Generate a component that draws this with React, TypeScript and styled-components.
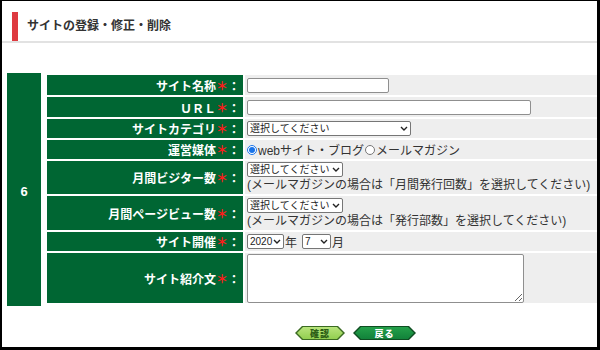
import React from "react";
import styled, { createGlobalStyle } from "styled-components";

const GlobalStyle = createGlobalStyle`
  html, body {
    margin: 0;
    padding: 0;
    background: #000;
  }
  body {
    font-family: "Liberation Sans", "Noto Sans CJK JP", sans-serif;
    font-size: 12px;
    color: #333;
  }
`;

const Chevron = () => (
  <ChevronIcon width="8" height="5" viewBox="0 0 8 5">
    <path d="M1 1 L4 4 L7 1" fill="none" stroke="#222" strokeWidth="1.4" />
  </ChevronIcon>
);

const SelectBox = ({ width, options }: { width: number; options: string[] }) => (
  <SelectWrap>
    <Select style={{ width }} defaultValue={options[0]}>
      {options.map((o) => (
        <option key={o}>{o}</option>
      ))}
    </Select>
    <Chevron />
  </SelectWrap>
);

const Label = ({ text }: { text: string }) => (
  <LabelCell>
    {text}
    <Req>＊</Req>：
  </LabelCell>
);

const App = () => {
  return (
    <>
      <GlobalStyle />
      <Page>
        <Header>
          <Title>サイトの登録・修正・削除</Title>
        </Header>

        <FormTable>
          <NumberCell>6</NumberCell>
          <Grid>
            <Label text="サイト名称" />
            <Field>
              <TextInput style={{ width: 142 }} />
            </Field>

            <Label text="ＵＲＬ" />
            <Field>
              <TextInput style={{ width: 284 }} />
            </Field>

            <Label text="サイトカテゴリ" />
            <Field>
              <SelectBox width={164} options={["選択してください"]} />
            </Field>

            <Label text="運営媒体" />
            <Field>
              <RadioLabel>
                <Radio type="radio" name="media" defaultChecked />
                webサイト・ブログ
              </RadioLabel>
              <RadioLabel>
                <Radio type="radio" name="media" />
                メールマガジン
              </RadioLabel>
            </Field>

            <Label text="月間ビジター数" />
            <StackField>
              <SelectBox width={96} options={["選択してください"]} />
              <Note>(メールマガジンの場合は「月間発行回数」を選択してください)</Note>
            </StackField>

            <Label text="月間ページビュー数" />
            <StackField>
              <SelectBox width={96} options={["選択してください"]} />
              <Note>(メールマガジンの場合は「発行部数」を選択してください)</Note>
            </StackField>

            <Label text="サイト開催" />
            <Field>
              <SelectBox width={37} options={["2020"]} />
              <Unit>年</Unit>
              <Spacer />
              <SelectBox width={29} options={["7"]} />
              <Unit>月</Unit>
            </Field>

            <Label text="サイト紹介文" />
            <TopField>
              <TextArea />
            </TopField>
          </Grid>
        </FormTable>

        <Buttons>
          <ButtonFrame $w={50} $border="#3b6b22">
            <ButtonFace $bg="linear-gradient(#b8e47c, #92cf50)" $color="#2d5f17">
              確認
            </ButtonFace>
          </ButtonFrame>
          <ButtonFrame $w={63} $border="#0f4d22">
            <ButtonFace $bg="linear-gradient(#24a04a, #12823a)" $color="#fff">
              戻る
            </ButtonFace>
          </ButtonFrame>
        </Buttons>
      </Page>
    </>
  );
};

export default App;

const Page = styled.div`
  background: #fff;
  margin: 1px 3px 0 2px;
  height: 346px;
  overflow: hidden;
`;

const Header = styled.div`
  margin-top: 11px;
  padding-left: 10px;
  border-bottom: 2px solid #e2e2e2;
`;

const Title = styled.h2`
  margin: 0;
  height: 29px;
  line-height: 29px;
  border-left: 6px solid #de3a40;
  padding-left: 9px;
  font-size: 12px;
  font-weight: bold;
  color: #333;
`;

const FormTable = styled.div`
  display: flex;
  gap: 6px;
  margin-top: 30px;
  padding-left: 5px;
`;

const NumberCell = styled.div`
  width: 34px;
  background: #006633;
  color: #fff;
  font-weight: bold;
  font-size: 13px;
  display: flex;
  align-items: center;
  justify-content: center;
  padding-top: 3px;
  box-sizing: border-box;
`;

const Grid = styled.div`
  flex: 1;
  display: grid;
  grid-template-columns: 196px 1fr;
  grid-template-rows: 20px 20px 19px 19px 33px 34px 19px 50px;
  gap: 2px;
  padding: 2px 0 3px;
`;

const LabelCell = styled.div`
  background: #006633;
  color: #fff;
  font-weight: bold;
  font-size: 12px;
  display: flex;
  align-items: center;
  justify-content: flex-end;
  padding-right: 3px;
  white-space: nowrap;
  font-family: "Noto Sans CJK JP", sans-serif;
`;

const Req = styled.span`
  color: #ff1a1a;
`;

const Field = styled.div`
  background: #eeeeee;
  display: flex;
  align-items: center;
  padding-left: 2px;
  white-space: nowrap;
`;

const StackField = styled(Field)`
  flex-direction: column;
  align-items: flex-start;
  justify-content: center;
  gap: 1px;
`;

const TopField = styled(Field)`
  align-items: flex-start;
  padding-top: 1px;
`;

const TextInput = styled.input`
  box-sizing: border-box;
  height: 15px;
  border: 1px solid #8f8f8f;
  border-radius: 2px;
  background: #fff;
  padding: 0 2px;
  margin: 0;
  font-size: 11px;
`;

const SelectWrap = styled.span`
  position: relative;
  display: inline-flex;
`;

const Select = styled.select`
  appearance: none;
  box-sizing: border-box;
  height: 15px;
  border: 1px solid #767676;
  border-radius: 2px;
  background: #fff;
  padding: 0 0 0 2px;
  margin: 0;
  font-family: "Liberation Sans", "Noto Sans CJK JP", sans-serif;
  font-size: 10px;
  line-height: 13px;
  color: #222;
`;

const ChevronIcon = styled.svg`
  position: absolute;
  right: 3px;
  top: 5px;
  pointer-events: none;
`;

const RadioLabel = styled.label`
  display: inline-flex;
  align-items: center;
  font-size: 12px;
  color: #333;
  margin-right: 1px;
`;

const Radio = styled.input`
  width: 10px;
  height: 10px;
  margin: 0 1px 0 0;
  accent-color: #1a73e8;
`;

const Note = styled.span`
  font-size: 12px;
  color: #333;
  line-height: 15px;
`;

const Unit = styled.span`
  font-size: 12px;
  color: #333;
  margin-left: 1px;
`;

const Spacer = styled.span`
  width: 5px;
`;

const TextArea = styled.textarea`
  box-sizing: border-box;
  width: 277px;
  height: 49px;
  border: 1px solid #8f8f8f;
  border-radius: 2px;
  background: #fff;
  margin: 0;
  padding: 2px;
`;

const Buttons = styled.div`
  display: flex;
  gap: 8px;
  padding-left: 293px;
  margin-top: 20px;
`;

const hex = (n: number) =>
  `polygon(0 50%, ${n}px 0, calc(100% - ${n}px) 0, 100% 50%, calc(100% - ${n}px) 100%, ${n}px 100%)`;

const ButtonFrame = styled.span<{ $w: number; $border: string }>`
  display: flex;
  box-sizing: border-box;
  width: ${(p) => p.$w}px;
  height: 14px;
  padding: 1px 2px;
  background: ${(p) => p.$border};
  clip-path: ${hex(7)};
  cursor: pointer;
`;

const ButtonFace = styled.span<{ $bg: string; $color: string }>`
  flex: 1;
  display: flex;
  align-items: center;
  justify-content: center;
  background: ${(p) => p.$bg};
  color: ${(p) => p.$color};
  clip-path: ${hex(6)};
  font-family: "Noto Sans CJK JP", sans-serif;
  font-size: 9px;
  font-weight: 900;
  letter-spacing: 1px;
`;
